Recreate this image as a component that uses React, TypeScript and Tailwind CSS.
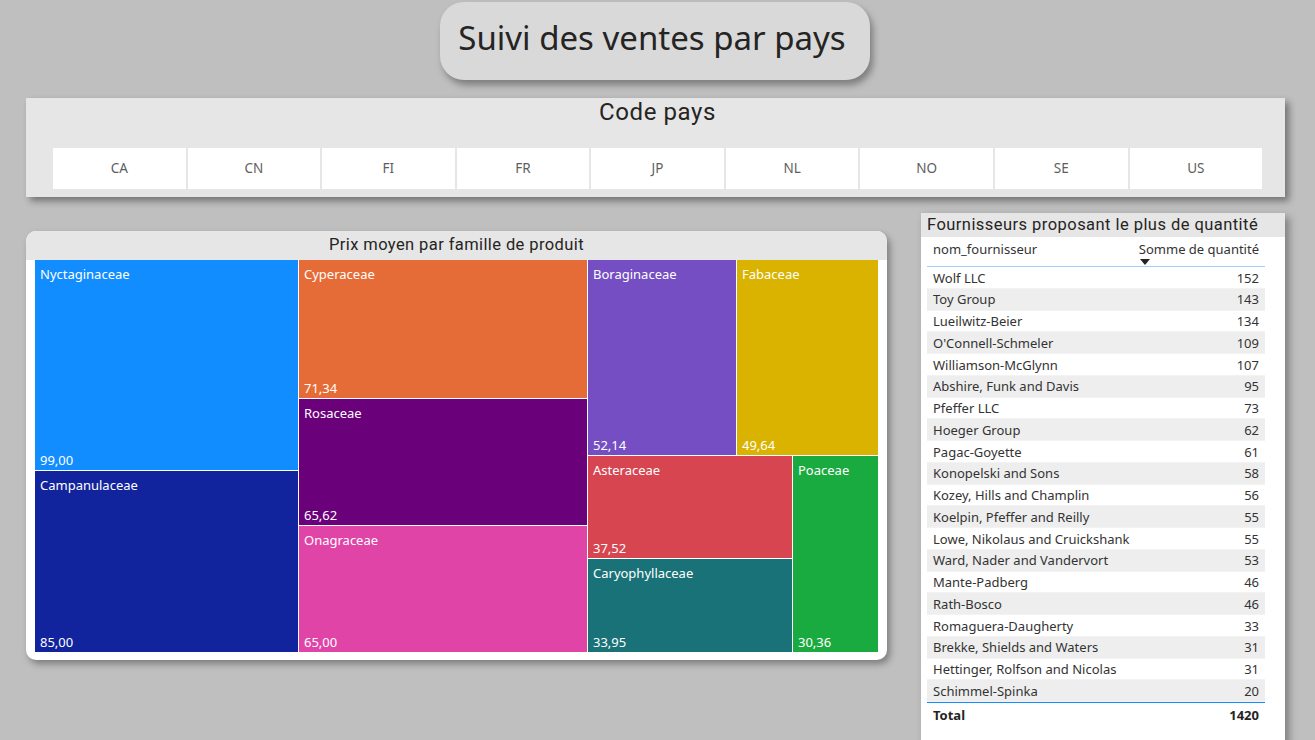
import React from "react";

const countries = ["CA", "CN", "FI", "FR", "JP", "NL", "NO", "SE", "US"];

const suppliers: [string, number][] = [
  ["Wolf LLC", 152],
  ["Toy Group", 143],
  ["Lueilwitz-Beier", 134],
  ["O'Connell-Schmeler", 109],
  ["Williamson-McGlynn", 107],
  ["Abshire, Funk and Davis", 95],
  ["Pfeffer LLC", 73],
  ["Hoeger Group", 62],
  ["Pagac-Goyette", 61],
  ["Konopelski and Sons", 58],
  ["Kozey, Hills and Champlin", 56],
  ["Koelpin, Pfeffer and Reilly", 55],
  ["Lowe, Nikolaus and Cruickshank", 55],
  ["Ward, Nader and Vandervort", 53],
  ["Mante-Padberg", 46],
  ["Rath-Bosco", 46],
  ["Romaguera-Daugherty", 33],
  ["Brekke, Shields and Waters", 31],
  ["Hettinger, Rolfson and Nicolas", 31],
  ["Schimmel-Spinka", 20],
];

function Cell({ name, value, className }: { name: string; value: string; className: string }) {
  return (
    <div className={`flex flex-col justify-between px-[5px] pt-[6px] pb-[1px] text-white text-[13px] leading-[17px] overflow-hidden ${className}`}>
      <span>{name}</span>
      <span>{value}</span>
    </div>
  );
}

export default function App() {
  return (
    <div className="w-[1315px] h-[740px] overflow-hidden bg-[#bfbfbf] font-['Noto_Sans',sans-serif] text-[#252423]">
      {/* titre */}
      <div className="flex pt-[2px] pl-[440px]">
        <div className="w-[430px] h-[78px] rounded-[24px] bg-[#d9d9d9] shadow-[3px_5px_7px_rgba(0,0,0,0.35)] flex items-center justify-center">
          <span className="text-[33px] text-[#252423] pb-[6px] pr-[6px]">Suivi des ventes par pays</span>
        </div>
      </div>

      {/* slicer */}
      <div className="ml-[26px] mt-[18px] w-[1259px] h-[99px] bg-[#e6e6e6] shadow-[4px_4px_7px_rgba(0,0,0,0.4)] pl-[27px] pr-[23px]">
        <div className="h-[50px] flex items-start justify-center font-['Roboto',sans-serif] tracking-[0.6px] text-[24px] leading-[28px] text-[#252423]">
          Code pays
        </div>
        <div className="flex gap-[2px]">
          {countries.map((c) => (
            <div key={c} className="flex-1 h-[41px] bg-white flex items-center justify-center text-[13.5px] text-[#605e5c]">
              {c}
            </div>
          ))}
        </div>
      </div>

      <div className="flex items-start mt-[16px]">
        {/* treemap */}
        <div className="ml-[26px] mt-[18px] w-[861px] h-[429px] rounded-[10px] bg-white shadow-[3px_4px_7px_rgba(0,0,0,0.35)] overflow-hidden flex flex-col">
          <div className="h-[29px] bg-[#e6e6e6] flex items-center justify-center font-['Roboto',sans-serif] tracking-[0.4px] text-[16.5px] text-[#252423]">
            Prix moyen par famille de produit
          </div>
          <div className="flex gap-px pl-[9px] pr-[9px] h-[392px]">
            <div className="w-[263px] flex flex-col gap-px">
              <Cell name="Nyctaginaceae" value="99,00" className="h-[210px] bg-[#118dff]" />
              <Cell name="Campanulaceae" value="85,00" className="flex-1 bg-[#12239e]" />
            </div>
            <div className="w-[288px] flex flex-col gap-px">
              <Cell name="Cyperaceae" value="71,34" className="h-[138px] bg-[#e66c37]" />
              <Cell name="Rosaceae" value="65,62" className="h-[126px] bg-[#6b007b]" />
              <Cell name="Onagraceae" value="65,00" className="flex-1 bg-[#e044a7]" />
            </div>
            <div className="flex-1 flex flex-col gap-px">
              <div className="h-[195px] flex gap-px">
                <Cell name="Boraginaceae" value="52,14" className="w-[148px] bg-[#744ec2]" />
                <Cell name="Fabaceae" value="49,64" className="flex-1 bg-[#d9b300]" />
              </div>
              <div className="flex-1 flex gap-px">
                <div className="w-[204px] flex flex-col gap-px">
                  <Cell name="Asteraceae" value="37,52" className="h-[102px] bg-[#d64550]" />
                  <Cell name="Caryophyllaceae" value="33,95" className="flex-1 bg-[#197278]" />
                </div>
                <Cell name="Poaceae" value="30,36" className="flex-1 bg-[#1aab40]" />
              </div>
            </div>
          </div>
        </div>

        {/* table */}
        <div className="ml-[34px] w-[364px] h-[540px] bg-white shadow-[4px_4px_8px_rgba(0,0,0,0.35)]">
          <div className="h-[24px] bg-[#e6e6e6] pl-[6px] flex items-center font-['Roboto',sans-serif] tracking-[0.45px] text-[16.5px] text-[#252423] whitespace-nowrap">
            Fournisseurs proposant le plus de quantité
          </div>
          <div className="pl-[6px] pr-[20px] text-[13px] text-[#333333]">
            <div className="h-[30px] border-b border-[#a3cdf5] flex justify-between pl-[6px] pr-[6px] pt-[3px]">
              <span>nom_fournisseur</span>
              <span className="relative">
                Somme de quantité
                <svg className="absolute left-[1px] top-[19px]" width="10" height="6" viewBox="0 0 10 6">
                  <path d="M0 0h10L5 6z" fill="#252423" />
                </svg>
              </span>
            </div>
            {suppliers.map(([n, q], i) => (
              <div
                key={n}
                className={`h-[21.75px] flex items-center justify-between pl-[6px] pr-[6px] pt-[2px] border-b border-[#f3f3f3] ${i % 2 === 1 ? "bg-[#eeeeee]" : "bg-white"}`}
              >
                <span>{n}</span>
                <span>{q}</span>
              </div>
            ))}
            <div className="border-t border-[#118dff] h-[24px] flex items-center justify-between pl-[6px] pr-[6px] pt-[2px] font-bold text-[#252423]">
              <span>Total</span>
              <span>1420</span>
            </div>
          </div>
        </div>
      </div>
    </div>
  );
}
